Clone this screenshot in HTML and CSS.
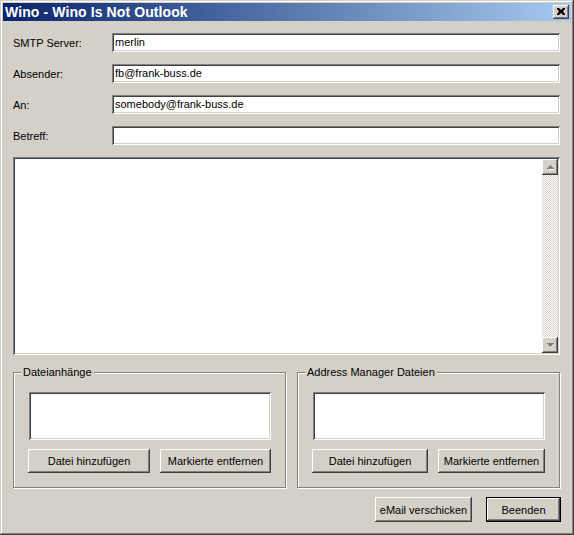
FILE: index.html
```html
<!DOCTYPE html>
<html>
<head>
<meta charset="utf-8">
<title>Wino</title>
<link rel="stylesheet" href="styles.css">
</head>
<body>
<div class="window">
  <div class="titlebar">
    <span class="title">Wino - Wino Is Not Outlook</span>
    <div class="close raised">
      <svg width="8" height="7" viewBox="0 0 8 7"><path d="M0 0h2l2 2 2-2h2v1l-2 2.5 2 2.5v1h-2l-2-2-2 2h-2v-1l2-2.5-2-2.5z" fill="#000"/></svg>
    </div>
  </div>
  <div class="client">
    <div class="row"><span class="label">SMTP Server:</span><div class="field sunken">merlin</div></div>
    <div class="row"><span class="label">Absender:</span><div class="field sunken">fb@frank-buss.de</div></div>
    <div class="row"><span class="label">An:</span><div class="field sunken">somebody@frank-buss.de</div></div>
    <div class="row"><span class="label">Betreff:</span><div class="field sunken"></div></div>
    <div class="memo sunken">
      <div class="memo-text"></div>
      <div class="scrollbar">
        <div class="sbtn raised">
          <svg width="7" height="5" viewBox="0 0 7 5"><path d="M4 2h1v1h1v1h1v1h-6z" fill="#fff"/><path d="M3 0h1v1h1v1h1v1h1v1h-7v-1h1v-1h1v-1h1z" fill="#808080"/></svg>
        </div>
        <div class="track"></div>
        <div class="sbtn raised">
          <svg width="7" height="5" viewBox="0 0 7 5"><path d="M5 1h2v1h-1v1h-1v1h-1v1h-1z" fill="#fff"/><path d="M0 0h7v1h-1v1h-1v1h-1v1h-1v-1h-1v-1h-1v-1h-1z" fill="#808080"/></svg>
        </div>
      </div>
    </div>
    <div class="groups">
      <div class="group group-left">
        <span class="legend">Dateianhänge</span>
        <div class="listbox sunken"></div>
        <div class="gbuttons">
          <div class="btn raised b1">Datei hinzufügen</div>
          <div class="btn raised b2">Markierte entfernen</div>
        </div>
      </div>
      <div class="group group-right">
        <span class="legend">Address Manager Dateien</span>
        <div class="listbox sunken"></div>
        <div class="gbuttons">
          <div class="btn raised b3">Datei hinzufügen</div>
          <div class="btn raised b4">Markierte entfernen</div>
        </div>
      </div>
    </div>
    <div class="footer">
      <div class="btn raised send">eMail verschicken</div>
      <div class="default"><div class="btn raised quit">Beenden</div></div>
    </div>
  </div>
</div>
</body>
</html>
```
FILE: styles.css
```css
html, body {
  margin: 0;
  padding: 0;
  background: #d4d0c8;
}
body {
  font-family: "Liberation Sans", Arial, sans-serif;
  font-size: 11px;
  color: #000;
}
.window {
  width: 574px;
  height: 535px;
  box-sizing: border-box;
  padding: 3px;
  background: #d4d0c8;
  box-shadow: inset -1px -1px #404040, inset 1px 1px #d4d0c8, inset -2px -2px #808080, inset 2px 2px #fff;
  display: flex;
  flex-direction: column;
}
.raised {
  background: #d4d0c8;
  box-shadow: inset -1px -1px #404040, inset 1px 1px #fff, inset -2px -2px #808080, inset 2px 2px #d4d0c8;
}
.sunken {
  background: #fff;
  box-shadow: inset 1px 1px #808080, inset -1px -1px #fff, inset 2px 2px #404040, inset -2px -2px #d4d0c8;
}
.titlebar {
  height: 18px;
  background: linear-gradient(to right, #0a246a, #a6caf0);
  display: flex;
  align-items: center;
  justify-content: space-between;
  padding: 0 2px 0 2px;
}
.title {
  color: #fff;
  font-weight: bold;
  font-size: 14px;
  letter-spacing: 0.1px;
}
.close {
  width: 16px;
  height: 14px;
  display: flex;
  align-items: center;
  justify-content: center;
}
.close svg { display: block; margin-left: -1px; margin-top: -1px; }
.client {
  padding: 12px 0 0 10px;
  display: flex;
  flex-direction: column;
}
.row {
  display: flex;
  align-items: center;
  height: 19px;
  margin-bottom: 12px;
}
.label {
  width: 99px;
}
.field {
  width: 448px;
  height: 19px;
  box-sizing: border-box;
  padding: 3px 0 0 3px;
  line-height: 13px;
}
.memo {
  margin-top: 0;
  width: 547px;
  height: 198px;
  box-sizing: border-box;
  padding: 2px;
  display: flex;
}
.memo-text { flex: 1; }
.scrollbar {
  width: 16px;
  display: flex;
  flex-direction: column;
}
.sbtn {
  width: 16px;
  height: 16px;
  display: flex;
  align-items: center;
  justify-content: center;
}
.sbtn svg { display: block; }
.track {
  flex: 1;
  background-color: #fff;
  background-image: conic-gradient(#d4d0c8 25%, #fff 0 50%, #d4d0c8 0 75%, #fff 0);
  background-size: 2px 2px;
}
.groups {
  display: flex;
  gap: 11px;
  margin-top: 17px;
}
.group {
  position: relative;
  height: 116px;
  box-sizing: border-box;
  border: 1px solid #808080;
  box-shadow: inset 1px 1px #fff, 1px 1px #fff;
  padding: 19px 0 0 15px;
}
.group-left { width: 273px; }
.group-right { width: 263px; }
.legend {
  position: absolute;
  top: -7px;
  left: 7px;
  padding: 0 2px;
  background: #d4d0c8;
  line-height: 13px;
}
.listbox {
  height: 48px;
}
.group-left .listbox { width: 242px; }
.group-right .listbox { width: 232px; }
.gbuttons {
  display: flex;
  gap: 10px;
  margin-top: 9px;
  margin-left: -1px;
}
.btn {
  height: 24px;
  box-sizing: border-box;
  display: flex;
  align-items: center;
  justify-content: center;
}
.b1 { width: 122px; }
.b2 { width: 111px; }
.b3 { width: 116px; }
.b4 { width: 107px; }
.footer {
  display: flex;
  justify-content: flex-end;
  gap: 14px;
  margin-top: 8px;
  padding-right: 10px;
}
.send {
  width: 97px;
  height: 25px;
  margin-top: 1px;
}
.default {
  border: 1px solid #000;
  width: 75px;
  height: 25px;
  box-sizing: border-box;
  margin-top: 1px;
}
.quit {
  width: 73px;
  height: 23px;
}
```
